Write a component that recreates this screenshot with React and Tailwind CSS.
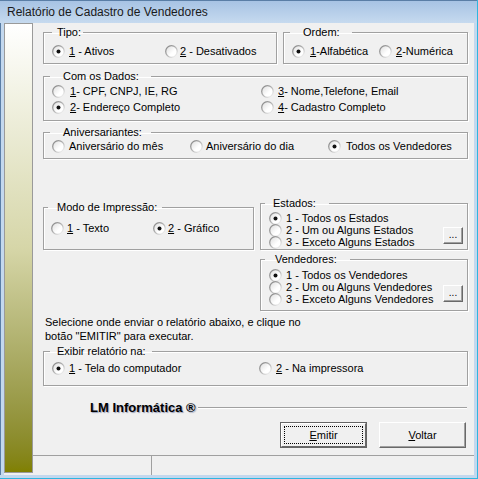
import React from 'react';

function Radio({ checked }) {
  return (
    <svg width="13" height="13" viewBox="0 0 13 13" className="shrink-0">
      <defs>
        <linearGradient id="rg" x1="0" y1="0" x2="1" y2="1">
          <stop offset="0" stopColor="#7f7f7f" />
          <stop offset="0.55" stopColor="#b9b9b9" />
          <stop offset="1" stopColor="#ffffff" />
        </linearGradient>
        <linearGradient id="rf" x1="0" y1="0" x2="1" y2="1">
          <stop offset="0" stopColor="#dcdcdc" />
          <stop offset="0.6" stopColor="#ffffff" />
        </linearGradient>
      </defs>
      <circle cx="6.5" cy="6.5" r="5.8" fill="url(#rf)" stroke="url(#rg)" strokeWidth="1.3" />
      {checked && <circle cx="6.5" cy="6.5" r="2" fill="#111" />}
    </svg>
  );
}

function Opt({ checked, acc, rest, w, gap = 'gap-[4px]' }) {
  return (
    <div className={`flex items-center ${gap} h-[13px] ${w || ''}`}>
      <Radio checked={checked} />
      <span className="whitespace-nowrap">
        {acc && <span className="underline underline-offset-[1px]">{acc}</span>}
        {rest}
      </span>
    </div>
  );
}

function Group({ label, lg, className, children }) {
  return (
    <fieldset className={`border border-[#a0a0a0] shadow-[inset_1px_1px_0_#ffffff,1px_1px_0_#ffffff] p-0 m-0 min-w-0 ${className}`}>
      <legend className={`leading-[12px] ${lg}`}>{label}</legend>
      {children}
    </fieldset>
  );
}

function DotsButton() {
  return (
    <div className="w-[20px] h-[17px] bg-[#f0f0f0] border border-t-white border-l-white border-r-[#696969] border-b-[#696969] shadow-[inset_-1px_-1px_0_#a0a0a0] flex items-end justify-center pb-[3px] text-[10px] leading-none">
      ...
    </div>
  );
}

export default function App() {
  return (
    <div
      className="w-[478px] h-[479px] flex flex-col bg-[#b4cdea] border-r border-r-[#2fb6e0] text-black text-[11px] overflow-hidden"
      style={{ fontFamily: '"Liberation Sans", Arial, sans-serif' }}
    >
      {/* title bar */}
      <div className="h-[23px] shrink-0 flex items-center pl-[7px] bg-gradient-to-b from-[#a7c3e4] to-[#c6daef] border-t border-t-[#5a7ea6] text-[12px] text-[#1a1a1a]">
        Relatório de Cadastro de Vendedores
      </div>

      <div className="flex flex-1 min-h-0">
        {/* left frame */}
        <div className="w-[4px] shrink-0 bg-[#c3d8ee] border-l border-l-[#5a7ea6]" />

        {/* client */}
        <div className="flex flex-1 bg-[#f0f0f0] min-w-0">
          {/* decorative strip */}
          <div className="w-[29px] shrink-0 mb-[2px] bg-gradient-to-b from-[#ffffff] via-[#d6d6a8] to-[#808000] border border-[#9a9a9a]" />

          <div className="flex-1 flex flex-col min-w-0">
            <div className="flex-1 pl-[10px] pr-[6px]">
              {/* Tipo / Ordem */}
              <div className="flex gap-[6px] mt-[3px]">
                <Group label="Tipo:" lg="ml-[8px] pl-[5px] pr-[2px]" className="w-[234px] h-[38px]">
                  <div className="flex mt-[7px] pl-[8px]">
                    <Opt checked acc="1" rest=" - Ativos" w="w-[113px]" />
                    <Opt acc="2" rest=" - Desativados" gap="gap-[2px]" />
                  </div>
                </Group>
                <Group label="Ordem:" lg="ml-[6px] pl-[13px] pr-[12px]" className="w-[185px] h-[38px]">
                  <div className="flex mt-[7px] pl-[8px]">
                    <Opt checked acc="1" rest="-Alfabética" w="w-[87px]" gap="gap-[5px]" />
                    <Opt acc="2" rest="-Numérica" gap="gap-[4px]" />
                  </div>
                </Group>
              </div>

              {/* Com os Dados */}
              <Group label="Com os Dados:" lg="ml-[6px] pl-[13px] pr-[12px]" className="mt-[6px] h-[51px]">
                <div className="flex mt-[3px] pl-[8px]">
                  <div className="w-[209px] flex flex-col gap-[3px]">
                    <Opt acc="1" rest="- CPF, CNPJ, IE, RG" gap="gap-[5px]" />
                    <Opt checked acc="2" rest="- Endereço Completo" gap="gap-[5px]" />
                  </div>
                  <div className="flex flex-col gap-[3px]">
                    <Opt acc="3" rest="- Nome,Telefone, Email" />
                    <Opt acc="4" rest="- Cadastro Completo" />
                  </div>
                </div>
              </Group>

              {/* Aniversariantes */}
              <Group label="Aniversariantes:" lg="ml-[6px] pl-[13px] pr-[9px]" className="mt-[5px] h-[33px]">
                <div className="flex mt-[2px] pl-[8px]">
                  <Opt rest="Aniversário do mês" w="w-[138px]" />
                  <Opt rest="Aniversário do dia" w="w-[138px]" gap="gap-[3px]" />
                  <Opt checked rest="Todos os Vendedores" gap="gap-[5px]" />
                </div>
              </Group>

              {/* Modo / Estados / Vendedores */}
              <div className="flex gap-[6px] mt-[38px]">
                <Group label="Modo de Impressão:" lg="ml-[4px] pl-[9px] pr-[5px]" className="w-[211px] h-[49px] mt-[4px] shrink-0">
                  <div className="flex mt-[9px] pl-[7px]">
                    <Opt acc="1" rest=" - Texto" w="w-[102px]" gap="gap-[3px]" />
                    <Opt checked acc="2" rest=" - Gráfico" gap="gap-[2px]" />
                  </div>
                </Group>
                <div className="flex-1 flex flex-col gap-[3px]">
                  <Group label="Estados:" lg="ml-[4px] pl-[8px] pr-[13px]" className="h-[53px]">
                    <div className="flex mt-[3px] pl-[8px] pr-[4px]">
                      <div className="flex-1 flex flex-col">
                        <div className="h-[12px] flex items-center"><Opt checked rest="1 - Todos os Estados" /></div>
                        <div className="h-[12px] flex items-center"><Opt rest="2 - Um ou Alguns Estados" /></div>
                        <div className="h-[12px] flex items-center"><Opt rest="3 - Exceto Alguns Estados" /></div>
                      </div>
                      <div className="mt-[15px]"><DotsButton /></div>
                    </div>
                  </Group>
                  <Group label="Vendedores:" lg="ml-[4px] pl-[10px] pr-[13px]" className="h-[58px]">
                    <div className="flex mt-[4px] pl-[8px] pr-[4px]">
                      <div className="flex-1 flex flex-col">
                        <div className="h-[12px] flex items-center"><Opt checked rest="1 - Todos os Vendedores" /></div>
                        <div className="h-[12px] flex items-center"><Opt rest="2 - Um ou Alguns Vendedores" /></div>
                        <div className="h-[12px] flex items-center"><Opt rest="3 - Exceto Alguns Vendedores" /></div>
                      </div>
                      <div className="mt-[16px]"><DotsButton /></div>
                    </div>
                  </Group>
                </div>
              </div>

              {/* instructions */}
              <div className="mt-[4px] pl-[2px] leading-[14px]">
                Selecione onde enviar o relatório abaixo, e clique no<br />
                botão "EMITIR" para executar.
              </div>

              {/* Exibir */}
              <Group label="Exibir relatório na:" lg="ml-[6px] pl-[7px] pr-[6px]" className="mt-[2px] h-[41px]">
                <div className="flex mt-[5px] pl-[8px]">
                  <Opt checked acc="1" rest=" - Tela do computador" w="w-[207px]" />
                  <Opt acc="2" rest=" - Na impressora" />
                </div>
              </Group>

              {/* LM */}
              <div className="flex items-center mt-[14px] h-[15px] pl-[47px] pr-[1px]">
                <span
                  className="font-bold text-[13px] whitespace-nowrap"
                  style={{ fontFamily: 'Arial, "Liberation Sans", sans-serif', textShadow: '1px 1px 1px rgba(40,60,120,0.45)' }}
                >
                  LM Informática ®
                </span>
                <div className="flex-1 ml-[2px] h-[2px] border-t border-t-[#a0a0a0] border-b border-b-white" />
              </div>

              {/* buttons */}
              <div className="flex justify-end gap-[12px] mt-[7px] pr-[2px]">
                <div className="w-[87px] h-[26px] border border-[#646464] flex">
                  <div className="flex-1 border border-t-white border-l-white border-r-[#696969] border-b-[#696969] p-[2px] flex">
                    <div className="flex-1 border border-dotted border-black flex items-center justify-center">
                      <span><span className="underline">E</span>mitir</span>
                    </div>
                  </div>
                </div>
                <div className="w-[87px] h-[26px] border border-t-white border-l-white border-r-[#696969] border-b-[#696969] shadow-[inset_-1px_-1px_0_#a0a0a0] flex items-center justify-center">
                  <span><span className="underline">V</span>oltar</span>
                </div>
              </div>
            </div>

            {/* status bar */}
            <div className="h-[20px] shrink-0 flex border-t border-t-[#a0a0a0]">
              <div className="w-[119px] border-r border-r-[#a0a0a0]" />
              <div className="flex-1" />
            </div>
          </div>
        </div>

        {/* right frame */}
        <div className="w-[3px] shrink-0 bg-[#c3d8ee]" />
      </div>

      {/* bottom frame */}
      <div className="h-[4px] shrink-0 bg-[#c3d8ee] border-b border-b-[#2fb6e0]" />
    </div>
  );
}
